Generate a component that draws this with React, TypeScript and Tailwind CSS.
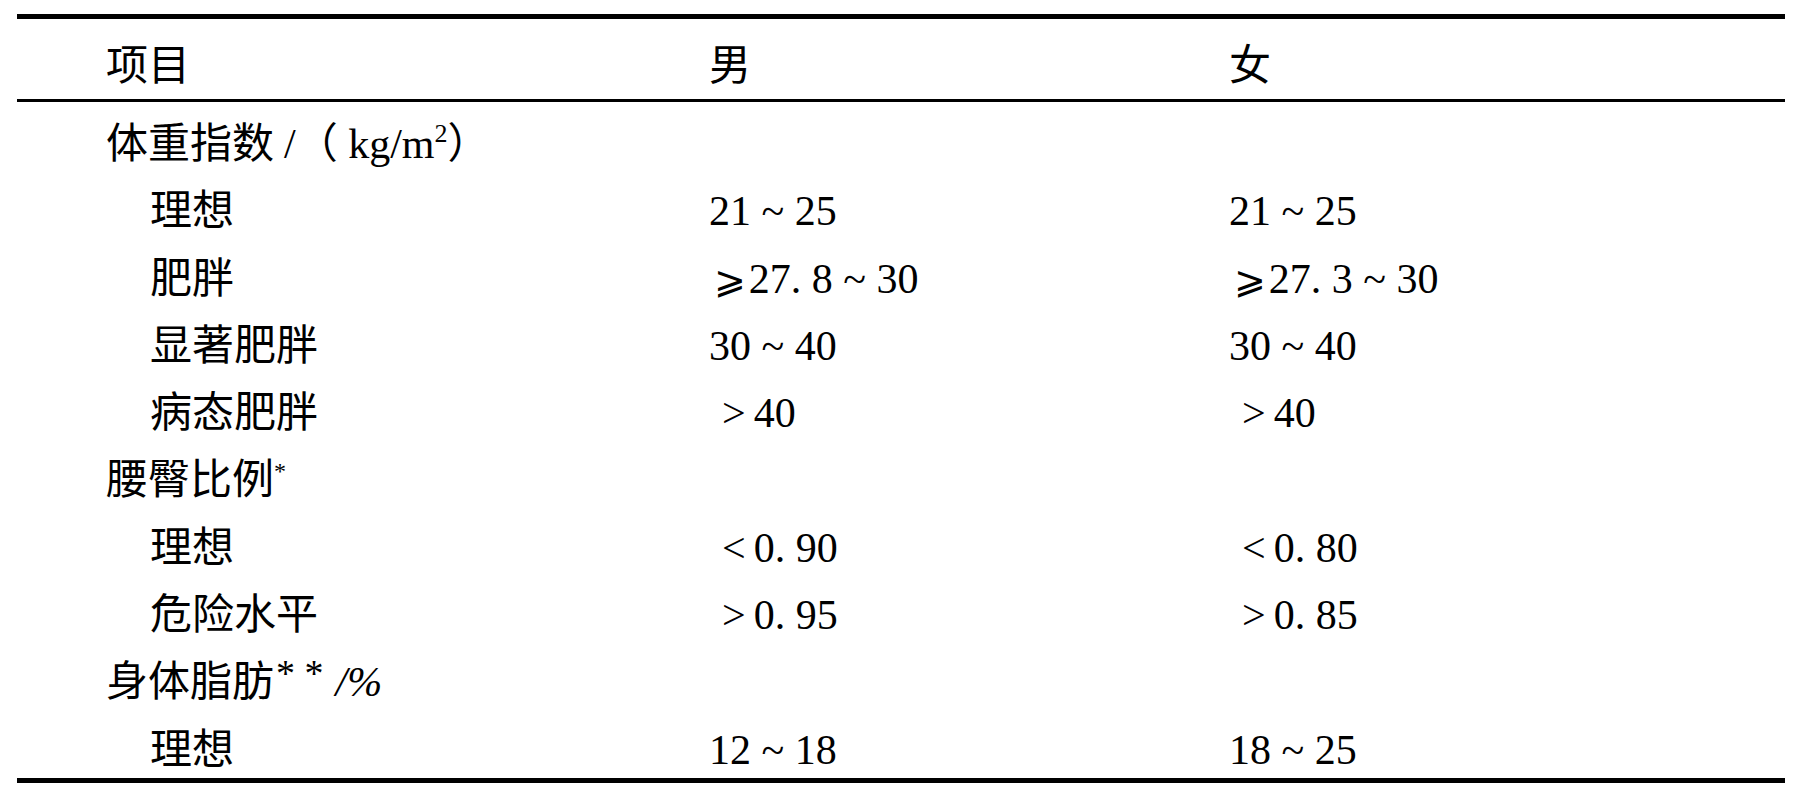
import React from 'react';

type Row = {
  label: React.ReactNode;
  sub?: boolean;
  male?: React.ReactNode;
  female?: React.ReactNode;
};

const Ge = () => <span className="font-['DejaVu_Sans',sans-serif] text-[38px] pl-[5px] pr-[3px]">⩾</span>;
const Gt = () => <span className="pl-[13px] pr-[8px]">&gt;</span>;
const Lt = () => <span className="pl-[13px] pr-[8px]">&lt;</span>;

const rows: Row[] = [
  {
    label: (
      <>
        体重指数<span className="pl-[10px]">/</span>（ kg/m
        <span className="text-[26px] align-top leading-none relative top-[4px]">2</span>）
      </>
    ),
  },
  { label: '理想', sub: true, male: '21 ~ 25', female: '21 ~ 25' },
  {
    label: '肥胖',
    sub: true,
    male: (
      <>
        <Ge />
        27. 8 ~ 30
      </>
    ),
    female: (
      <>
        <Ge />
        27. 3 ~ 30
      </>
    ),
  },
  { label: '显著肥胖', sub: true, male: '30 ~ 40', female: '30 ~ 40' },
  {
    label: '病态肥胖',
    sub: true,
    male: (
      <>
        <Gt />
        40
      </>
    ),
    female: (
      <>
        <Gt />
        40
      </>
    ),
  },
  {
    label: (
      <>
        腰臀比例<span className="text-[24px] align-top leading-none relative top-[6px]">*</span>
      </>
    ),
  },
  {
    label: '理想',
    sub: true,
    male: (
      <>
        <Lt />
        0. 90
      </>
    ),
    female: (
      <>
        <Lt />
        0. 80
      </>
    ),
  },
  {
    label: '危险水平',
    sub: true,
    male: (
      <>
        <Gt />
        0. 95
      </>
    ),
    female: (
      <>
        <Gt />
        0. 85
      </>
    ),
  },
  {
    label: (
      <>
        身体脂肪<span className="text-[38px] relative -top-[10px] pl-[2px]">* *</span>
        <span className="italic pl-[12px]">/%</span>
      </>
    ),
  },
  { label: '理想', sub: true, male: '12 ~ 18', female: '18 ~ 25' },
];

export default function App() {
  return (
    <div className="min-h-screen bg-white pt-[14px] pl-[17px] text-black text-[42px] font-['Liberation_Serif','Noto_Sans_CJK_SC',serif]">
      <div className="w-[1768px] border-t-[5px] border-b-[5px] border-black">
        <div className="grid grid-cols-[603px_520px_1fr] h-[83px] pl-[89px] border-b-[3px] border-black">
          <div className="pt-[12px] leading-[71px]">项目</div>
          <div className="pt-[12px] leading-[71px]">男</div>
          <div className="pt-[12px] leading-[71px]">女</div>
        </div>
        <div className="pt-[3px]">
          {rows.map((r, i) => (
            <div
              key={i}
              className="grid grid-cols-[603px_520px_1fr] h-[67.3px] pl-[89px] whitespace-pre"
            >
              <div className={`pt-[12px] leading-[55px] ${r.sub ? 'pl-[44px]' : ''}`}>{r.label}</div>
              <div className="pt-[12px] leading-[55px]">{r.male}</div>
              <div className="pt-[12px] leading-[55px]">{r.female}</div>
            </div>
          ))}
        </div>
      </div>
    </div>
  );
}
